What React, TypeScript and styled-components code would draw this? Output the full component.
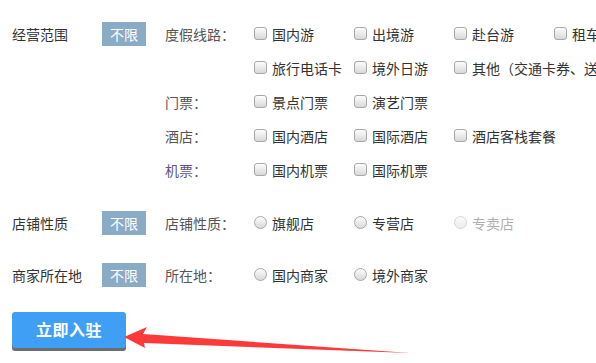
import React from "react";
import styled, { createGlobalStyle } from "styled-components";

const Global = createGlobalStyle`
  html, body { margin: 0; padding: 0; background: #fff; overflow: hidden; }
  body { font-family: "Noto Sans CJK SC", "Noto Sans", sans-serif; font-size: 14px; color: #333; }
`;

const Page = styled.div`
  width: 596px;
  height: 363px;
  padding: 17px 0 0 12px;
  box-sizing: border-box;
  overflow: hidden;
`;

const Section = styled.div`
  display: grid;
  grid-template-columns: 90px 63px 1fr;
  margin-bottom: ${(p: { gap: number }) => p.gap}px;
`;

const Label = styled.div`
  height: 34px;
  line-height: 34px;
  color: #333;
  white-space: nowrap;
`;

const BadgeCell = styled.div`
  height: 34px;
  display: flex;
  align-items: center;
`;

const Badge = styled.span`
  width: 44px;
  height: 24px;
  line-height: 24px;
  text-align: center;
  background: #8aabc5;
  color: #fff;
`;

const Lines = styled.div`
  display: flex;
  flex-direction: column;
`;

const Line = styled.div`
  height: 34px;
  display: flex;
  align-items: center;
  white-space: nowrap;
`;

const SubLabel = styled.span<{ $tone?: string }>`
  width: 89px;
  flex: none;
  color: ${(p) => p.$tone || "#555"};
`;

const Option = styled.label<{ $disabled?: boolean }>`
  width: 100px;
  flex: none;
  display: flex;
  align-items: center;
  gap: 5px;
  color: ${(p) => (p.$disabled ? "#b0b0b0" : "#333")};
  white-space: nowrap;
`;

const Box = styled.span<{ $round?: boolean; $disabled?: boolean }>`
  width: 13px;
  height: 13px;
  box-sizing: border-box;
  flex: none;
  border: 1px solid ${(p) => (p.$disabled ? "#d6d6d6" : "#a8a8a8")};
  border-radius: ${(p) => (p.$round ? "50%" : "3px")};
  background: ${(p) =>
    p.$disabled
      ? "linear-gradient(#fbfbfb, #ececec)"
      : "linear-gradient(#fdfdfd, #d8d8d8)"};
  position: relative;
  top: -1px;
`;

const ButtonRow = styled.div`
  position: relative;
  margin-left: -12px;
  padding-left: 12px;
  height: 52px;
`;

const Submit = styled.button`
  width: 114px;
  height: 39px;
  border: none;
  border-radius: 3px;
  background: #3e9ff4;
  box-shadow: 0 3px 0 #6a6d72;
  color: #fff;
  font-family: "Noto Sans CJK SC", sans-serif;
  font-size: 16px;
  font-weight: bold;
  letter-spacing: 0.5px;
  padding: 0 0 3px;
  cursor: pointer;
  height: 36px;
  margin-top: 0;
`;

const Arrow = styled.svg`
  position: absolute;
  left: 0;
  top: 0;
  width: 596px;
  height: 52px;
  pointer-events: none;
`;

type Opt = { text: string; disabled?: boolean };
type LineData = { label?: string; tone?: string; round?: boolean; options: Opt[] };
type SectionData = { label: string; gap: number; lines: LineData[] };

const sections: SectionData[] = [
  {
    label: "经营范围",
    gap: 19,
    lines: [
      { label: "度假线路：", options: [{ text: "国内游" }, { text: "出境游" }, { text: "赴台游" }, { text: "租车自驾" }] },
      { options: [{ text: "旅行电话卡" }, { text: "境外日游" }, { text: "其他（交通卡券、送签服务）" }] },
      { label: "门票：", options: [{ text: "景点门票" }, { text: "演艺门票" }] },
      { label: "酒店：", options: [{ text: "国内酒店" }, { text: "国际酒店" }, { text: "酒店客栈套餐" }] },
      { label: "机票：", tone: "#5d5484", options: [{ text: "国内机票" }, { text: "国际机票" }] },
    ],
  },
  {
    label: "店铺性质",
    gap: 18,
    lines: [
      {
        label: "店铺性质：",
        round: true,
        options: [{ text: "旗舰店" }, { text: "专营店" }, { text: "专卖店", disabled: true }],
      },
    ],
  },
  {
    label: "商家所在地",
    gap: 20,
    lines: [{ label: "所在地：", round: true, options: [{ text: "国内商家" }, { text: "境外商家" }] }],
  },
];

export default function App() {
  return (
    <Page>
      <Global />
      {sections.map((s) => (
        <Section key={s.label} gap={s.gap}>
          <Label>{s.label}</Label>
          <BadgeCell>
            <Badge>不限</Badge>
          </BadgeCell>
          <Lines>
            {s.lines.map((l, i) => (
              <Line key={i}>
                <SubLabel $tone={l.tone}>{l.label || ""}</SubLabel>
                {l.options.map((o) => (
                  <Option key={o.text} $disabled={o.disabled}>
                    <Box $round={l.round} $disabled={o.disabled} />
                    {o.text}
                  </Option>
                ))}
              </Line>
            ))}
          </Lines>
        </Section>
      ))}
      <ButtonRow>
        <Submit>立即入驻</Submit>
        <Arrow viewBox="0 0 596 52">
          <polygon
            points="124,25 147,15 143,22 410,41 144,31 145,36"
            fill="#fd3a3a"
          />
        </Arrow>
      </ButtonRow>
    </Page>
  );
}
